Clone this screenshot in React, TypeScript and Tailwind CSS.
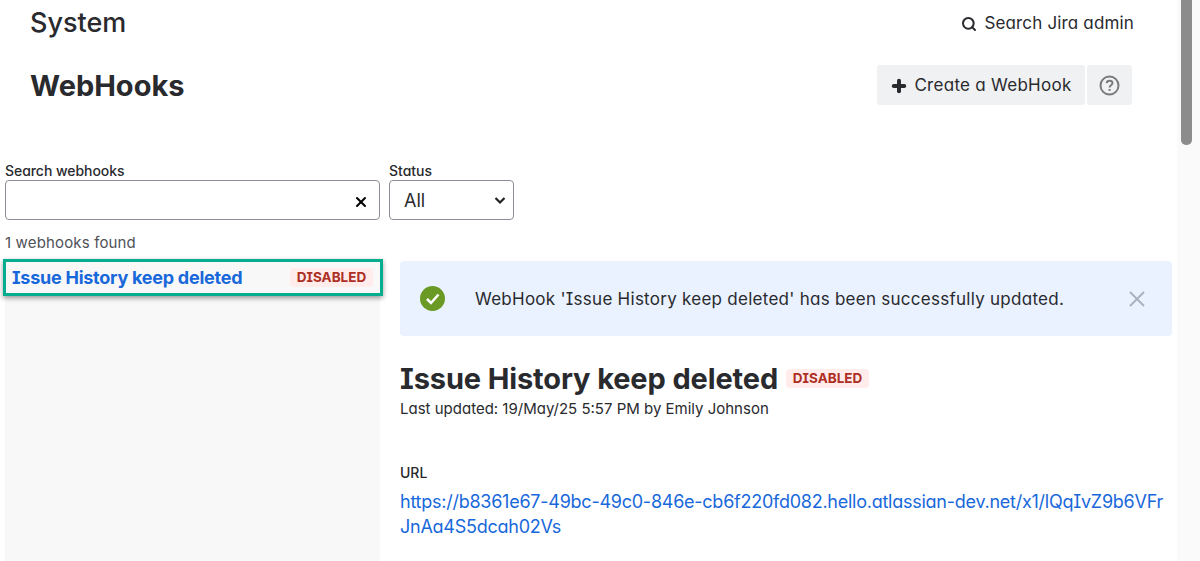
import { Plus, Search, X } from 'lucide-react'

function DisabledBadge() {
    return (
        <span className="inline-flex h-[19px] w-[83px] shrink-0 items-center justify-center rounded-[4px] bg-[#ffeceb] text-[13.5px] font-bold leading-none text-[#ae2e24]">
            DISABLED
        </span>
    )
}

export default function App() {
    return (
        <div className="flex h-[561px] w-[1200px] overflow-hidden bg-white text-[#292a2e] [font-family:Inter,'Noto_Sans',sans-serif] [font-feature-settings:'cv08','cv11']">
            <div className="w-[1177px] shrink-0">
                <div className="flex h-[44px] items-center justify-between pl-[30px] pr-[43px]">
                    <h2 className="text-[27px] font-medium leading-none">System</h2>
                    <div className="flex items-center gap-[7px] pt-[3px] text-[17px] tracking-[0.16px]">
                        <Search className="h-[16px] w-[16px]" strokeWidth={3} />
                        Search Jira admin
                    </div>
                </div>
                <div className="mt-[21px] flex h-[40px] items-center justify-between pl-[30px] pr-[45px]">
                    <h1 className="text-[29px] font-bold leading-none">WebHooks</h1>
                    <div className="flex gap-[2px]">
                        <button className="flex h-[40px] w-[208px] items-center justify-center gap-[6px] rounded-[3px] bg-[#f0f1f2] pt-[1px] text-[17px] tracking-[0.28px]">
                            <Plus className="h-[18px] w-[18px]" strokeWidth={5.3} />
                            Create a WebHook
                        </button>
                        <button className="flex h-[40px] w-[45px] items-center justify-center rounded-[3px] bg-[#f0f1f2]">
                            <svg width="21" height="21" viewBox="0 0 21 21" fill="none" stroke="#7a7a7a" strokeWidth="2">
                                <circle cx="10.5" cy="10.5" r="9" />
                                <path d="M7.6 8.2c.2-1.6 1.4-2.5 3-2.5 1.700 0 2.900 1 2.900 2.400 0 2.200-2.900 2.200-2.900 4.300" />
                                <path d="M10.6 14v1.900" />
                            </svg>
                        </button>
                    </div>
                </div>

                <div className="mt-[55px] flex items-start gap-[9px] pl-[5px]">
                    <div className="w-[375px]">
                        <label className="block h-[20px] text-[14px] font-medium leading-[21px] tracking-[-0.05px]">Search webhooks</label>
                        <div className="flex h-[40px] items-center justify-end rounded-[4px] border border-[#8c8f97] pr-[10px] pt-[4px]">
                            <X className="h-[16px] w-[16px] text-black" strokeWidth={3} />
                        </div>
                    </div>
                    <div className="w-[125px]">
                        <label className="block h-[20px] text-[14px] font-medium leading-[21px]">Status</label>
                        <div className="flex h-[40px] items-center justify-between rounded-[4px] border border-[#8c8f97] pl-[14px] pr-[6px] text-[18px]">
                            All
                            <svg width="14" height="14" viewBox="0 0 14 14" fill="none" stroke="#222" strokeWidth="2.200">
                                <path d="M2.500 5l4.500 4.500 4.500-4.500" />
                            </svg>
                        </div>
                    </div>
                </div>

                <p className="mt-[13px] pl-[5px] text-[15px] leading-[20px] tracking-[0.15px] text-[#505258]">1 webhooks found</p>

                <div className="mt-[8px] flex items-start gap-[20px] pl-[5px]">
                    <div className="h-[301px] w-[375px] shrink-0 bg-[#f8f8f8]">
                        <div className="ml-[-2px] mt-[-2px] flex h-[37px] w-[380px] items-center justify-between border-[3px] border-[#05ad8f] bg-[#f8f8f8] pl-[6px] pr-[7px] shadow-[0_2px_5px_rgba(0,0,0,0.4)]">
                            <span className="text-[18px] font-bold tracking-[-0.25px] text-[#1868db]">Issue History keep deleted</span>
                            <DisabledBadge />
                        </div>
                    </div>

                    <div className="w-[772px] shrink-0">
                        <div className="flex h-[75px] items-center rounded-[4px] bg-[#e9f2fe] pl-[20px] pr-[27px]">
                            <svg width="25" height="25" viewBox="0 0 25 25" className="shrink-0">
                                <circle cx="12.500" cy="12.500" r="12.500" fill="#6a9a23" />
                                <path d="M7 13l4 4 7.500-8.500" fill="none" stroke="#fff" strokeWidth="2.500" />
                            </svg>
                            <p className="ml-[30px] flex-1 pt-[2px] text-[17px] tracking-[0.265px]">WebHook 'Issue History keep deleted' has been successfully updated.</p>
                            <svg width="16" height="16" viewBox="0 0 16 16" fill="none" stroke="#aab2c0" strokeWidth="2">
                                <path d="M1 1l14 14M15 1L1 15" />
                            </svg>
                        </div>

                        <div className="mt-[25px] flex items-center gap-[8px]">
                            <h2 className="text-[29px] font-bold leading-[36px] tracking-[-0.13px]">Issue History keep deleted</h2>
                            <div className="mb-[4px]">
                                <DisabledBadge />
                            </div>
                        </div>
                        <p className="mt-[2px] text-[15px] leading-[20px]">Last updated: 19/May/25 5:57 PM by Emily Johnson</p>

                        <p className="mt-[44px] text-[14px] font-medium leading-[20px]">URL</p>
                        <a className="mt-[6px] block break-all text-[18px] leading-[25px] tracking-[-0.25px] text-[#1868db]">
                            https://b8361e67-49bc-49c0-846e-cb6f220fd082.hello.atlassian-dev.net/x1/lQqIvZ9b6VFrJnAa4S5dcah02Vs
                        </a>
                    </div>
                </div>
            </div>

            <div className="flex-1 bg-[#fafafa] pl-[4px]">
                <div className="h-[145px] w-[11px] rounded-b-[5px] bg-[#8c8c8c]" />
            </div>
        </div>
    )
}
